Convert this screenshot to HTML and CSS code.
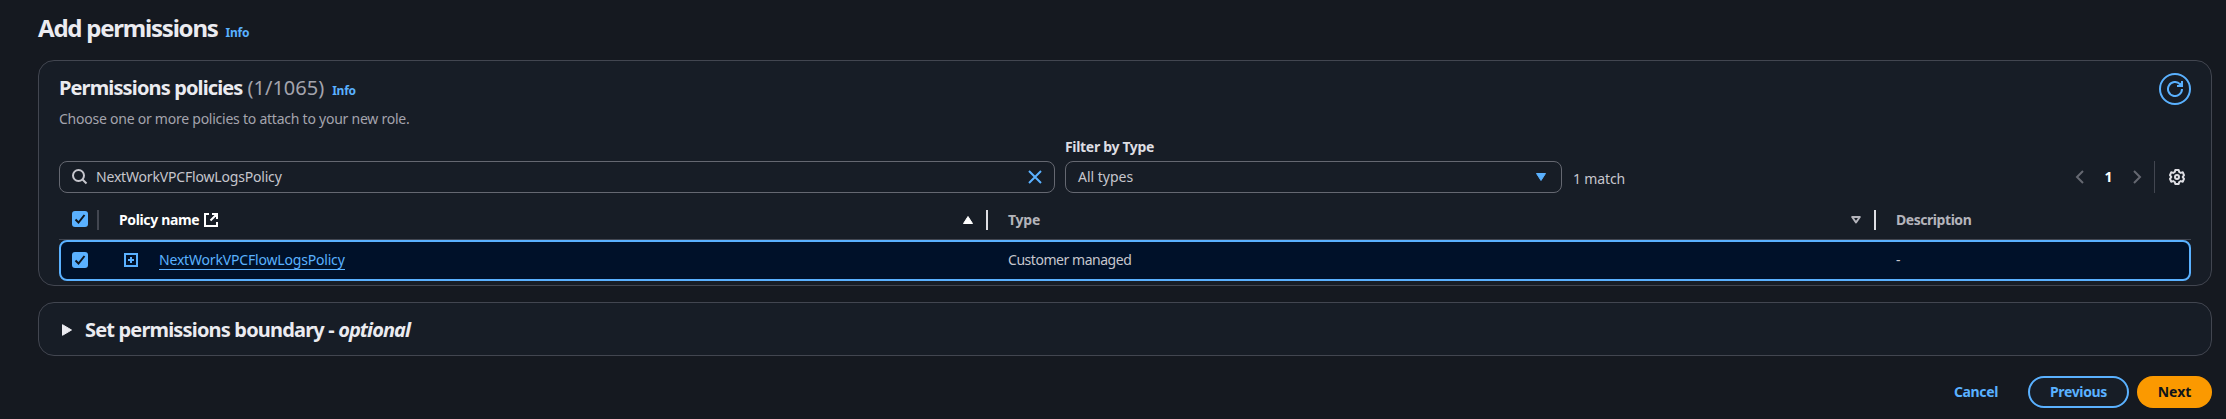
FILE: index.html
```html
<!DOCTYPE html>
<html lang="en">
<head>
<meta charset="utf-8">
<title>Add permissions</title>
<link rel="stylesheet" href="styles.css">
</head>
<body>
<main class="page">
  <header class="page-header">
    <h1 class="t-h1">Add permissions</h1>
    <a class="info t-info">Info</a>
  </header>

  <section class="card policies">
    <div class="card-header">
      <div class="card-title">
        <h2 class="t-h2">Permissions policies</h2>
        <span class="counter">(1/1065)</span>
        <a class="info t-info">Info</a>
      </div>
      <button class="refresh" aria-label="Refresh">
        <svg width="16" height="16" viewBox="0 0 16 16" fill="none" stroke="currentColor" stroke-width="2"><path d="M15 8a7 7 0 1 1-2-4.900L14.500 4.500"/><path d="M15 0v5h-5"/><path d="M14.500 1v3.500H11z" fill="currentColor" stroke="none"/></svg>
      </button>
    </div>
    <p class="description"><span class="t-desc">Choose one or more policies to attach to your new role.</span></p>

    <div class="toolbar">
      <div class="field search">
        <svg width="16" height="16" viewBox="0 0 16 16" fill="none" stroke="currentColor" stroke-width="2"><circle cx="6.5" cy="6.5" r="5.5"/><path d="M10.5 10.5 14.500 14.500"/></svg>
        <span class="search-text t-name">NextWorkVPCFlowLogsPolicy</span>
        <svg class="blue" width="16" height="16" viewBox="0 0 16 16" fill="none" stroke="currentColor" stroke-width="2"><path d="m2 2 12 12M14 2 2 14"/></svg>
      </div>
      <div class="filter">
        <label class="t-filter">Filter by Type</label>
        <div class="field select">
          <span class="t-all">All types</span>
          <svg class="blue" width="10" height="8" viewBox="0 0 10 8"><path d="M.5 .5h9L5 7.500z" fill="currentColor" stroke="currentColor" stroke-linejoin="round"/></svg>
        </div>
      </div>
      <span class="matches"><span class="t-match">1 match</span></span>
      <div class="pagination">
        <svg class="dim" width="16" height="16" viewBox="0 0 16 16" fill="none" stroke="currentColor" stroke-width="2"><path d="m11 2-6 6 6 6"/></svg>
        <b class="page-number">1</b>
        <svg class="dim" width="16" height="16" viewBox="0 0 16 16" fill="none" stroke="currentColor" stroke-width="2"><path d="m5 2 6 6-6 6"/></svg>
      </div>
      <div class="settings">
        <svg width="16" height="16" viewBox="0 0 16 16" fill="none" stroke="currentColor" stroke-width="2" stroke-linejoin="round"><path d="M6.300 1h3.400l.5 2 1.600.9 2-.6L15 6.200 13.700 8 15 9.800l-1.200 2.900-2-.6-1.600.9-.5 2H6.300l-.5-2-1.600-.9-2 .6L1 9.800 2.300 8 1 6.200l1.200-2.900 2 .6 1.600-.9z"/><circle cx="8" cy="8" r="2"/></svg>
      </div>
    </div>

    <div class="table">
      <div class="row head">
        <div class="cell select-cell"><span class="checkbox"><svg width="12" height="12" viewBox="0 0 12 12" fill="none" stroke="currentColor" stroke-width="2"><path d="m1.500 6.500 3 3 6-7.500"/></svg></span><i class="divider muted"></i></div>
        <div class="cell name-cell"><span class="white t-pname">Policy name</span>
          <svg class="external white" width="16" height="16" viewBox="0 0 16 16" fill="none" stroke="currentColor" stroke-width="2"><path d="M6 2H2v12h12v-4M9 2h5v5M14 2 7.500 8.500"/></svg>
          <svg class="sort white" width="10" height="8" viewBox="0 0 10 8"><path d="M.5 7.500h9L5 .5z" fill="currentColor" stroke="currentColor" stroke-linejoin="round"/></svg><i class="divider"></i></div>
        <div class="cell type-cell"><span class="t-type">Type</span>
          <svg class="sort" width="10" height="8" viewBox="0 0 10 8" fill="none" stroke="currentColor" stroke-width="2" stroke-linejoin="round"><path d="M1.200 1h7.600L5 6.500z"/></svg><i class="divider"></i></div>
        <div class="cell desc-cell"><span class="t-dhead">Description</span></div>
      </div>
      <div class="row selected">
        <div class="cell select-cell"><span class="checkbox"><svg width="12" height="12" viewBox="0 0 12 12" fill="none" stroke="currentColor" stroke-width="2"><path d="m1.500 6.500 3 3 6-7.500"/></svg></span></div>
        <div class="cell name-cell">
          <svg class="expand blue" width="14" height="14" viewBox="0 0 14 14" fill="none" stroke="currentColor" stroke-width="2"><path d="M1 1h12v12H1zM4 7h6M7 4v6"/></svg>
          <a class="policy-link t-name">NextWorkVPCFlowLogsPolicy</a>
        </div>
        <div class="cell type-cell"><span class="t-customer">Customer managed</span></div>
        <div class="cell desc-cell">-</div>
      </div>
    </div>
  </section>

  <section class="card boundary">
    <svg width="10" height="12" viewBox="0 0 10 12"><path d="M.5 .7v10.600L9.500 6z" fill="currentColor" stroke="currentColor" stroke-linejoin="round"/></svg>
    <h2><span class="t-set">Set permissions boundary - </span><em class="t-opt">optional</em></h2>
  </section>

  <footer class="actions">
    <button class="button cancel"><span class="t-btn">Cancel</span></button>
    <button class="button previous"><span class="t-btn">Previous</span></button>
    <button class="button next"><span>Next</span></button>
  </footer>
</main>
</body>
</html>
```
FILE: styles.css
```css
* { box-sizing: border-box; }
body {
  margin: 0;
  height: 419px;
  background: #151920;
  color: #c6c6cd;
  font: 14px/20px "Noto Sans", "Open Sans", sans-serif;
  overflow: hidden;
}
h1, h2, p { margin: 0; white-space: nowrap; }
svg { display: block; flex: none; }
span, a, label { white-space: nowrap; }
button { font: inherit; background: none; padding: 0; }
.page { padding: 0 14px 0 38px; }
.page-header { display: flex; align-items: baseline; height: 60px; padding-top: 13px; gap: 8px; }
.page-header h1 { font-size: 24px; line-height: 30px; color: #ebebf0; }
.info { font-size: 12px; font-weight: 700; color: #5ab1ff; }
.blue { color: #5ab1ff; }
.white { color: #fff; }
.dim { color: #656871; }
.card { border: 1px solid #424650; border-radius: 16px; background: #171d26; }
.policies { height: 226px; padding: 12px 20px 0; }
.card-header { display: flex; justify-content: space-between; height: 32px; }
.card-title { display: flex; align-items: baseline; padding-top: 3px; }
.card-title h2 { font-size: 20px; line-height: 24px; color: #ebebf0; }
.counter { font-size: 20px; line-height: 24px; color: #a4a4ad; margin: 0 8px 0 5px; }
.refresh { display: grid; place-items: center; width: 32px; height: 32px; border: 2px solid #5ab1ff; border-radius: 50%; color: #5ab1ff; }
.description { height: 28px; padding-top: 4px; color: #a4a4ad; }
.toolbar { display: flex; align-items: flex-end; height: 60px; }
.field { display: flex; align-items: center; height: 32px; border: 1px solid #656871; border-radius: 8px; }
.search { width: 996px; padding: 0 11px 0 12px; gap: 8px; margin-right: 10px; }
.search-text { flex: 1; }
.filter { width: 497px; margin-right: 11px; }
.filter label { display: block; height: 24px; font-weight: 700; color: #dedee3; }
.select { justify-content: space-between; padding: 0 15px 0 12px; }
.matches { height: 24px; }
.pagination { display: flex; align-items: center; height: 32px; margin-left: auto; margin-right: 9px; }
.page-number { width: 41px; text-align: center; color: #fff; }
.settings { display: flex; align-items: center; width: 37px; height: 32px; padding-left: 14px; border-left: 1px solid #424650; color: #dedee3; }
.row { display: flex; align-items: center; }
.head { height: 47px; padding-top: 9px; padding-bottom: 1px; border-bottom: 1px solid #424650; font-weight: 700; color: #b4b4bb; }
.cell { display: flex; align-items: center; }
.select-cell { width: 40px; padding-left: 13px; justify-content: space-between; }
.name-cell { width: 889px; padding-left: 20px; }
.type-cell { width: 888px; padding-left: 20px; }
.desc-cell { flex: 1; padding-left: 20px; }
.divider { width: 2px; height: 20px; background: #dedee3; }
.divider.muted { background: #424650; }
.checkbox { display: grid; place-items: center; width: 16px; height: 16px; border-radius: 3px; background: #5ab1ff; color: #0f141a; }
.head .checkbox { margin-bottom: 2px; }
.external { margin-left: 4px; }
.sort { margin-left: auto; margin-right: 13px; }
.selected { height: 41px; padding-bottom: 1px; border: 2px solid #5ab1ff; border-radius: 8px; background: #001129; }
.selected .select-cell { width: 38px; padding-left: 11px; }
.selected .name-cell { padding-left: 25px; }
.expand { margin-right: 21px; }
.policy-link { color: #5ab1ff; border-bottom: 1px solid #5ab1ff; line-height: 19px; }
.boundary { display: flex; align-items: center; height: 54px; margin-top: 16px; padding: 2px 0 0 23px; gap: 13px; color: #ebebf0; }
.boundary h2 { font-size: 20px; line-height: 24px; }
.boundary h2 span { white-space: pre; }
.actions { display: flex; justify-content: flex-end; margin-top: 20px; }
.button { height: 32px; border: 0; border-radius: 16px; font-weight: 700; color: #5ab1ff; }
.cancel { width: 86px; margin-right: 9px; }
.previous { width: 101px; border: 2px solid #5ab1ff; background: #171d26; margin-right: 8px; }
.next { width: 75px; background: #fb9900; color: #0f141a; }

/* Text tracking */
.t-h1 { letter-spacing: -1.22px; }
.t-info { letter-spacing: -.25px; }
.t-h2 { letter-spacing: -.87px; }
.t-desc { letter-spacing: -.24px; }
.t-name { letter-spacing: -.18px; }
.t-filter { letter-spacing: -.32px; }
.t-match { letter-spacing: -.15px; }
.t-pname { letter-spacing: -.36px; }
.t-type { letter-spacing: -.25px; }
.t-customer { letter-spacing: -.46px; }
.t-dhead { letter-spacing: -.45px; }
.t-set { letter-spacing: -.83px; }
.t-opt { letter-spacing: -.95px; }
.t-btn { letter-spacing: -.35px; }
```
